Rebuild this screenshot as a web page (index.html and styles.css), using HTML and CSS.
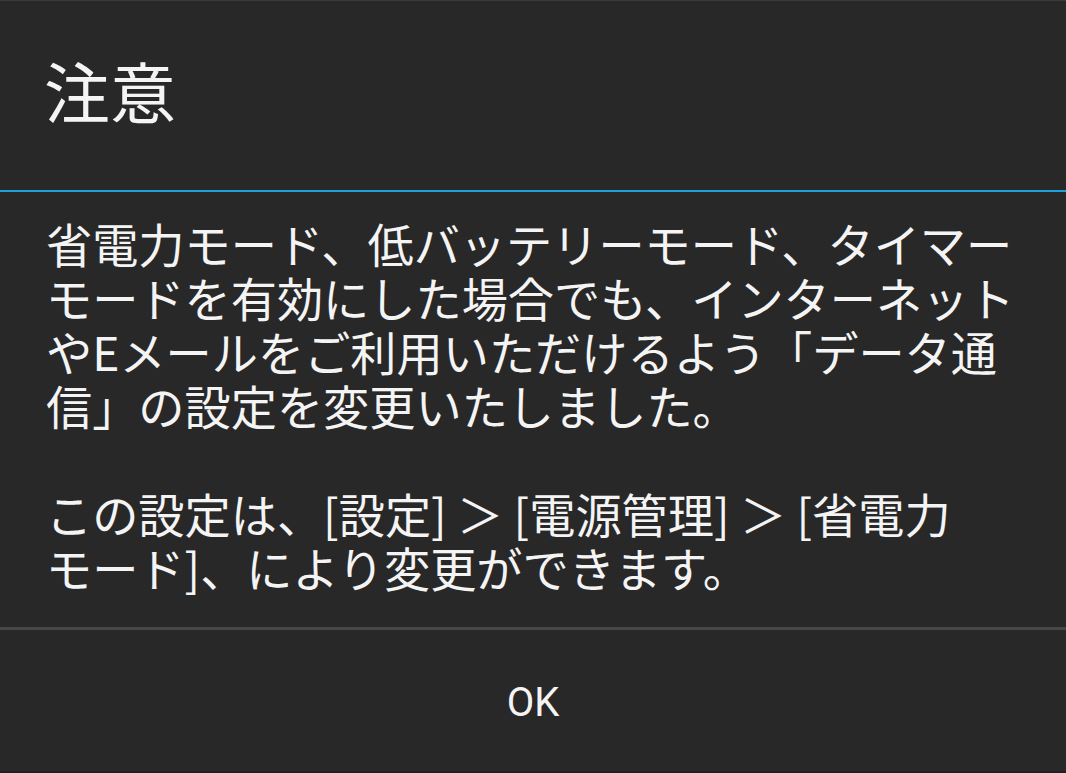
FILE: index.html
```html
<!DOCTYPE html>
<html lang="ja">
<head>
  <meta charset="UTF-8" />
  <meta name="viewport" content="width=device-width, initial-scale=1.0"/>
  <title>注意</title>
  <link rel="stylesheet" href="styles.css">
</head>
<body>

  <div class="dialog">
    <div class="dialog-title">注意</div>

    <div class="dialog-message">
      <p>省電力モード、低バッテリーモード、タイマー<br>モードを有効にした場合でも、インターネット<br>やEメールをご利用いただけるよう「データ通<br>信」の設定を変更いたしました。</p>
      <p>この設定は、[設定] ＞ [電源管理] ＞ [省電力<br>モード]、により変更ができます。</p>
    </div>

    <div class="dialog-buttons">
      <button class="dialog-btn">OK</button>
    </div>
  </div>

</body>
</html>
```

FILE: styles.css
```css
html, body {
  margin: 0;
  padding: 0;
}

body {
  background-color: #282828;
  color: #f4f4f4;
  font-family: "Noto Sans CJK JP", "Noto Sans", sans-serif;
  overflow: hidden;
}

.dialog {
  height: 773px;
  box-sizing: border-box;
  display: flex;
  flex-direction: column;
  border-top: 1px solid #3a3a3a;
  border-bottom: 2px solid #1f1f1f;
}

.dialog-title {
  height: 191px;
  flex-shrink: 0;
  box-sizing: border-box;
  display: flex;
  align-items: center;
  padding-left: 44px;
  padding-bottom: 14px;
  font-size: 66px;
  border-bottom: 2px solid #1ea0da;
}

.dialog-message {
  flex: 1;
  min-height: 0;
  padding: 24px 20px 0 46px;
  font-size: 46.2px;
  line-height: 54px;
  white-space: nowrap;
}

.dialog-message p {
  margin: 0 0 54px 0;
}

.dialog-message p:last-child {
  margin-bottom: 0;
}

.dialog-buttons {
  height: 144px;
  flex-shrink: 0;
  box-sizing: border-box;
  border-top: 3px solid #474747;
  display: flex;
  align-items: center;
  justify-content: center;
}

.dialog-btn {
  background: none;
  border: none;
  color: #f4f4f4;
  font-family: Roboto, "Noto Sans", sans-serif;
  font-size: 40px;
  padding: 0 20px;
  margin-top: 4px;
}
```
